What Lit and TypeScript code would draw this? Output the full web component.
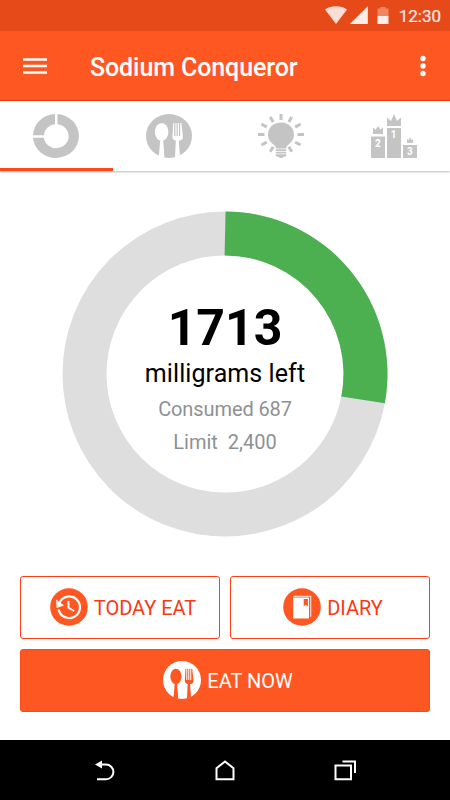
import { LitElement, html, css, svg } from "lit";
import { customElement, property } from "lit/decorators.js";

const cutlery = (disc: string, tool: string) => svg`
  <ellipse cx="23" cy="22" rx="23" ry="22" fill=${disc}></ellipse>
  <g fill=${tool}>
    <ellipse cx="15.6" cy="17.9" rx="6.8" ry="8.9"></ellipse>
    <path d="M14.2 26h3L18.400 43.500h-4.900l-.6-2z"></path>
    <path d="M27.200 9h1v13h1.200V9h1.200v13h1.200V9h1.200v13h1.200V9h1.200l1.500 13.500c.1 3-1.600 4.200-5.100 4.200s-5.600-1.200-5.400-4.200z"></path>
    <path d="M29.900 26h2.800l1.200 15.500-4.900 2.200z"></path>
  </g>`;

@customElement("summary-ring")
class SummaryRing extends LitElement {
  @property({ type: Number }) percent = 28;

  static styles = css`
    :host { display: grid; width: 326px; height: 326px; }
    svg { grid-area: 1 / 1; }
    .text { grid-area: 1 / 1; display: flex; flex-direction: column; align-items: center; padding-top: 87px; white-space: pre; }
    .big { font: 700 50px/60px Roboto, sans-serif; color: #000; }
    .unit { font: 400 25px/30px Roboto, sans-serif; letter-spacing: 0.08px; color: #000; padding-top: 1px; }
    .sub { font: 400 20px/33px Roboto, sans-serif; color: #8e9194; }
    .first { margin-top: 4px; letter-spacing: -0.1px; }
  `;

  point(radius: number, degrees: number) {
    const a = (degrees * Math.PI) / 180;
    return `${163 + radius * Math.sin(a)} ${163 - radius * Math.cos(a)}`;
  }

  render() {
    const end = this.percent * 3.6;
    const arc = `M${this.point(162.5, 0.2)}A162.5 162.5 0 0 1 ${this.point(162.5, end - 0.4)}L${this.point(118.5, end + 0.2)}A118.5 118.5 0 0 0 ${this.point(118.5, -0.2)}z`;
    return html`
      <svg width="326" height="326" viewBox="0 0 326 326">
        <circle cx="163" cy="163" r="140.5" fill="none" stroke="#dedede" stroke-width="44"></circle>
        <path d=${arc} fill="#4caf50"></path>
      </svg>
      <div class="text">
        <div class="big">1713</div>
        <div class="unit">milligrams left</div>
        <div class="sub first">Consumed 687</div>
        <div class="sub">Limit  2,400</div>
      </div>`;
  }
}

@customElement("app-root")
class AppRoot extends LitElement {
  static styles = css`
    :host { display: flex; flex-direction: column; width: 450px; height: 800px; background: #fff; font-family: Roboto, sans-serif; overflow: hidden; }
    svg { display: block; flex: none; }
    .status { height: 31px; background: #e64a19; display: flex; justify-content: flex-end; align-items: center; padding-right: 9px; box-sizing: border-box; color: #fdece7; font-size: 17px; font-weight: 400; -webkit-text-stroke: 0.2px #fdece7; gap: 10px; }
    .bar { height: 70px; box-sizing: border-box; background: #ff5722; border-bottom: 1px solid #ee3a10; display: flex; align-items: center; padding: 1px 24.5px 0 23px; color: #fff; }
    .title { font-size: 25px; font-weight: 500; letter-spacing: -0.1px; margin-left: 43px; padding-top: 3px; flex: 1; }
    .tabs { height: 70px; display: grid; grid-template-columns: repeat(4, 1fr); box-shadow: 0 1px 2px rgba(0,0,0,.28); }
    .tab { display: flex; justify-content: center; align-items: center; box-sizing: border-box; border-bottom: 3.5px solid transparent; padding-top: 2px; }
    .active { border-color: #ff4a17; }
    .main { flex: 1; display: flex; flex-direction: column; align-items: center; padding-top: 39.5px; }
    .actions { margin-top: 39px; width: 410px; display: grid; grid-template-columns: 1fr 1fr; gap: 10px; }
    .btn { height: 63px; box-sizing: border-box; border: 1px solid #ff3d14; border-radius: 3px; color: #f83a12; display: flex; align-items: center; justify-content: center; gap: 6px; font-size: 20px; padding-left: 6px; }
    .btn span { padding-top: 2px; }
    .wide { grid-column: 1 / 3; background: #ff5722; border-color: #ff4615; color: #fff; }
    .nav { height: 60px; background: #000; display: flex; align-items: center; justify-content: center; gap: 90px; }
    .num { font: 700 10px Roboto, sans-serif; fill: #fff; text-anchor: middle; }
  `;

  tabIcon(i: number) {
    const g = "#c4c4c4";
    if (i === 0)
      return svg`<path fill=${g} d="M24.500 0A23 22 0 1 1 0 23.800H10.800A12.500 12 0 1 0 24.500 10.200zM22 0V10.200A12.500 12 0 0 0 10.800 21.200H0A23 22 0 0 1 22 0z"></path>`;
    if (i === 1) return cutlery(g, "#fff");
    if (i === 2)
      return svg`
        <path fill=${g} d="M23 8.500c7.500 0 13 5 13 12 0 5.500-3.500 8.500-6 10.500-1.800 1.400-1.800 2-1.800 3.600H17.800c0-1.600 0-2.200-1.800-3.600-2.500-2-6-5-6-10.500 0-7 5.500-12 13-12zM17.800 35.300h10.400v1.700H17.800zM17.800 37.800h10.400v1.700H17.800zM17.800 40.200h10.400v1.800L26 43h-1l-.8 1h-2.400L21 43h-1l-2.200-1z"></path>
        <path stroke=${g} stroke-width="3" d="M23 0v6M12.200 3l3 5M33.800 3l-3 5M3.400 10l5.400 3.100M42.600 10l-5.400 3.100M0 20.500h6.500M46 20.500h-6.500M3.400 31l5.400-2.800M42.600 31l-5.400-2.800M12.200 37.800l3-5M33.800 37.800l-3-5"></path>`;
    return svg`
      <path fill=${g} d="M0 22.500h14V44H0zM16 14h14v30H16zM32 31h14v13H32zM2 20V13.500l2.700 2.200L7 12l2.300 3.700 2.700-2.200V20zM16 12V3.500l4 3.400L23 0l3 6.900 4-3.400V12zM36 29v-4l1.800 1.300L39 23l1.200 3.300L42 25v4z"></path>
      <text class="num" x="6.800" y="32.500">2</text>
      <text class="num" x="22.500" y="24">1</text>
      <text class="num" x="38.800" y="41.300">3</text>`;
  }

  render() {
    return html`
      <div class="status">
        <svg width="64" height="19" viewBox="0 0 64 19">
          <path d="M0 3.500C6-.700 16-.700 22 3.500L11 18z" fill="#fbddd3"></path>
          <path d="M24.800 18L42.800.300V18z" fill="#fdece7"></path>
          <path d="M52.500 2.500h3v-1.500h5v1.500h3v8h-11z" fill="#f08660"></path>
          <path d="M52.500 10h11v8h-11z" fill="#fdece7"></path>
        </svg>
        <span>12:30</span>
      </div>
      <div class="bar">
        <svg width="24" height="18" viewBox="0 0 24 18"><path d="M0 2.500h24M0 9h24M0 15.500h24" stroke="#fff" stroke-width="2.700"></path></svg>
        <div class="title">Sodium Conqueror</div>
        <svg width="6" height="22" viewBox="0 0 6 22" fill="#fff"><circle cx="3" cy="3.500" r="2.700"></circle><circle cx="3" cy="11" r="2.700"></circle><circle cx="3" cy="18.500" r="2.700"></circle></svg>
      </div>
      <div class="tabs">
        ${[0, 1, 2, 3].map((i) => html`<div class="tab ${i === 0 ? "active" : ""}"><svg width="46" height="44" viewBox="0 0 46 44">${this.tabIcon(i)}</svg></div>`)}
      </div>
      <div class="main">
        <summary-ring .percent=${28}></summary-ring>
        <div class="actions">
          <div class="btn">
            <svg width="38" height="38" viewBox="0 0 38 38">
              <circle cx="19" cy="19" r="18.800" fill="#ff5722"></circle>
              <path d="M9.500 14.500A10.800 10.800 0 1 1 8.600 21.500" fill="none" stroke="#fff" stroke-width="2.200"></path>
              <path d="M6.200 11.500l.4 8.500 7.400-2.500z" fill="#fff"></path>
              <path d="M18.500 13v6.800l5.700 3.200" fill="none" stroke="#fff" stroke-width="1.900"></path>
            </svg>
            <span>TODAY EAT</span>
          </div>
          <div class="btn">
            <svg width="38" height="38" viewBox="0 0 38 38">
              <circle cx="19" cy="19" r="18.800" fill="#ff5722"></circle>
              <path d="M10.200 9.500h15.800v21H10.200z" fill="#fff"></path>
              <path d="M10.500 8.300h17.200v20.500" fill="none" stroke="#ffd3c6" stroke-width="1.200"></path>
              <path d="M20.700 11h4.200v7.500l-2.100-1.800-2.100 1.800z" fill="#ff5722"></path>
            </svg>
            <span>DIARY</span>
          </div>
          <div class="btn wide">
            <svg width="38" height="38" viewBox="0 0 46 44" preserveAspectRatio="none">${cutlery("#fff", "#ff5722")}</svg>
            <span>EAT NOW</span>
          </div>
        </div>
      </div>
      <div class="nav">
        <svg width="30" height="24" viewBox="0 0 30 24"><path d="M8 6.500h8a7.200 7.200 0 0 1 0 14.800H7" fill="none" stroke="#fff" stroke-width="2"></path><path d="M5 6.500L12 2.500v8z" fill="#fff"></path></svg>
        <svg width="30" height="24" viewBox="0 0 30 24"><path d="M6.500 21.300V10.300L15 3.500l8.500 6.800v11z" fill="none" stroke="#fff" stroke-width="2"></path></svg>
        <svg width="30" height="24" viewBox="0 0 30 24" fill="none" stroke="#fff" stroke-width="2"><path d="M5.500 7.500h15.500v13.800H5.500zM12.500 3.500h12.500v11.500"></path></svg>
      </div>`;
  }
}
